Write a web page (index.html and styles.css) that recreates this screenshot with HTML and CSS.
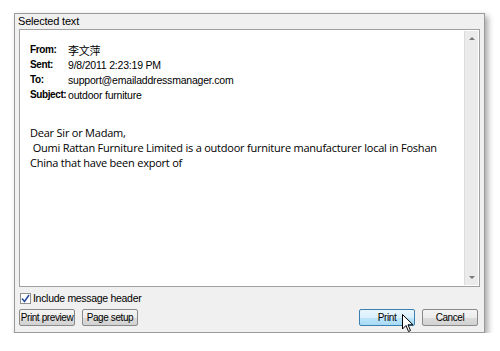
FILE: index.html
```html
<!DOCTYPE html>
<html lang="en">

<head>
    <meta charset="UTF-8">
    <title>Selected text</title>
    <link rel="stylesheet" href="styles.css">
</head>

<body>
    <div class="dialog">
        <div class="title">Selected text</div>

        <div class="preview">
            <div class="preview-body">
                <div class="header">
                    <span class="label">From:</span><span class="value cjk">李文萍</span>
                    <span class="label">Sent:</span><span class="value">9/8/2011 2:23:19 PM</span>
                    <span class="label">To:</span><span class="value">support@emailaddressmanager.com</span>
                    <span class="label">Subject:</span><span class="value">outdoor furniture</span>
                </div>
                <div class="message">
                    <div>Dear Sir or Madam,</div>
                    <div>&nbsp;Oumi Rattan Furniture Limited is a outdoor furniture manufacturer local in Foshan</div>
                    <div>China that have been export of</div>
                </div>
            </div>
            <div class="scrollbar">
                <span class="arrow up"></span>
                <span class="arrow down"></span>
            </div>
        </div>

        <label class="check-row">
            <span class="checkbox">
                <svg width="9" height="9" viewBox="0 0 9 9"><path d="M1 4.5 L3.5 7.5 L8 1" fill="none" stroke="#2b4f9e" stroke-width="1.6"/></svg>
            </span>
            Include message header
        </label>

        <div class="button-row">
            <button class="btn">Print preview</button>
            <button class="btn">Page setup</button>
            <span class="spacer"></span>
            <button class="btn btn-print">Print</button>
            <button class="btn">Cancel</button>
        </div>

        <svg class="cursor" width="13" height="20" viewBox="0 0 13 20">
            <path d="M0.5 0.5 L0.5 15 L4 11.5 L6.5 17.5 L8.5 16.6 L6 10.8 L11 10.8 Z" fill="#fff" stroke="#000" stroke-width="1"/>
        </svg>
    </div>
</body>

</html>
```

FILE: styles.css
```css
body {
    margin: 0;
    background: #ffffff;
    font-family: 'Liberation Sans', sans-serif;
}

.dialog {
    position: relative;
    margin: 13px 0 0 14px;
    width: 469px;
    height: 318px;
    background: #f0f0f0;
    border: 1px solid #9a9a9a;
    box-shadow: 3px 3px 6px rgba(0, 0, 0, 0.35);
    display: flex;
    flex-direction: column;
    font-size: 11px;
    color: #000;
}

.title {
    height: 15px;
    padding: 0 0 0 3px;
    font-size: 11px;
    line-height: 14px;
    letter-spacing: -0.2px;
}

.preview {
    display: flex;
    margin: 0 4px;
    height: 256px;
    border: 1px solid #a0a0a0;
    background: #ffffff;
}

.preview-body {
    flex: 1;
    padding: 12px 0 0 10px;
    overflow: hidden;
}

.header {
    display: grid;
    grid-template-columns: 38px auto;
    grid-auto-rows: 15px;
    align-items: center;
    font-size: 10.5px;
    letter-spacing: -0.2px;
}

.header .label {
    font-size: 10px;
    font-weight: bold;
    letter-spacing: -0.4px;
}

.header .cjk {
    font-family: 'Noto Sans CJK SC', sans-serif;
    font-size: 11px;
}

.message {
    margin-top: 23px;
    font-family: 'Open Sans', sans-serif;
    font-size: 11px;
    line-height: 15px;
    letter-spacing: -0.22px;
    white-space: nowrap;
}

.scrollbar {
    position: relative;
    width: 13px;
    margin: 1px 1px 1px 0;
    background: #ebebeb;
    border-left: 1px solid #dcdcdc;
}

.arrow {
    position: absolute;
    left: 4px;
    width: 0;
    height: 0;
    border-left: 3px solid transparent;
    border-right: 3px solid transparent;
}

.arrow.up {
    top: 6px;
    border-bottom: 3px solid #777;
}

.arrow.down {
    bottom: 6px;
    border-top: 3px solid #777;
}

.check-row {
    display: flex;
    align-items: center;
    gap: 2px;
    margin: 4px 0 0 5px;
    height: 14px;
    font-size: 10.5px;
    letter-spacing: -0.3px;
}

.checkbox {
    width: 11px;
    height: 11px;
    border: 1px solid #8f8f8f;
    background: #fff;
    display: flex;
    align-items: center;
    justify-content: center;
    box-sizing: border-box;
}

.button-row {
    display: flex;
    gap: 7px;
    margin: 4px 6px 0 4px;
}

.spacer {
    flex: 1;
}

.btn {
    width: 56px;
    height: 17px;
    padding: 0;
    white-space: nowrap;
    border: 1px solid #8a8a8a;
    border-radius: 2px;
    background: linear-gradient(#f4f4f4 0%, #ececec 50%, #dcdcdc 51%, #d2d2d2 100%);
    font-family: 'Liberation Sans', sans-serif;
    font-size: 10px;
    letter-spacing: -0.4px;
    color: #000;
}

.btn-print {
    border-color: #3c7fb1;
    background: linear-gradient(#eaf6fd 0%, #d9f0fc 50%, #bee6fd 51%, #a7d9f5 100%);
}

.cursor {
    position: absolute;
    left: 387px;
    top: 300px;
}
```
